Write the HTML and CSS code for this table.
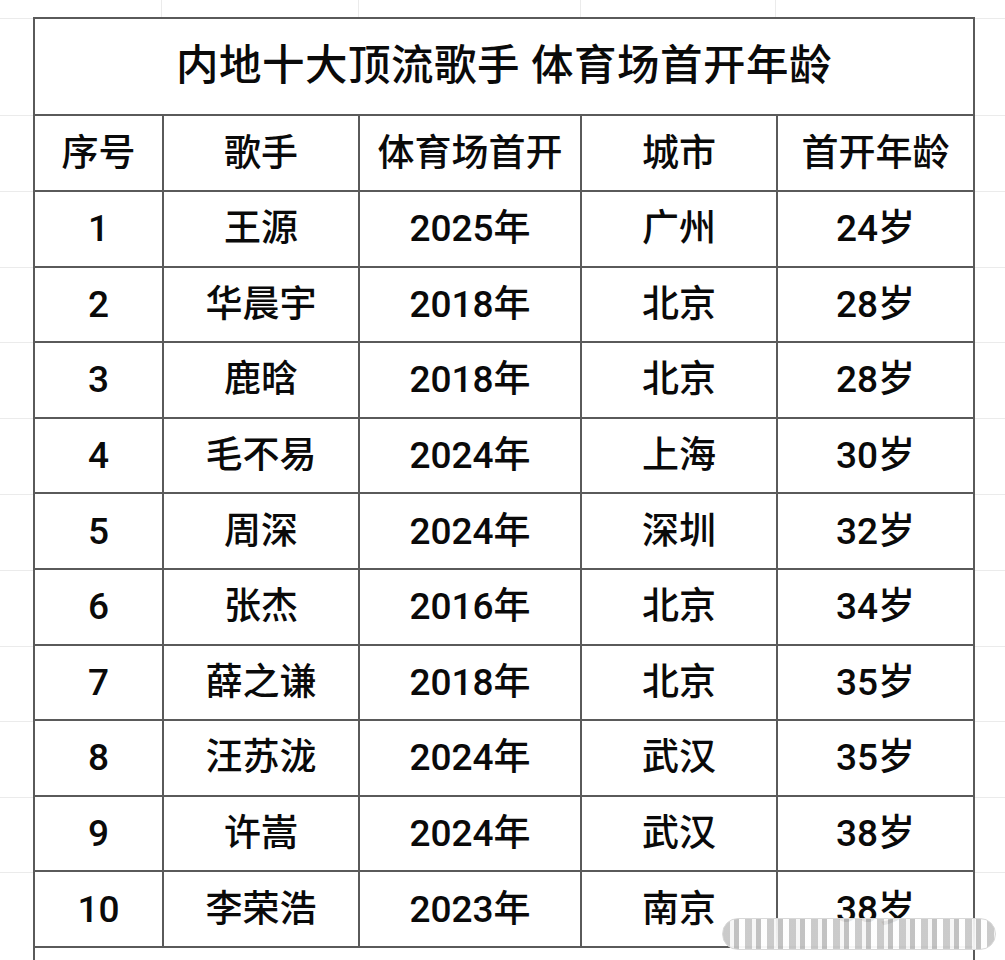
FILE: index.html
```html
<!DOCTYPE html>
<html lang="zh-CN">
<head>
<meta charset="utf-8">
<title>内地十大顶流歌手 体育场首开年龄</title>
<link rel="stylesheet" href="styles.css">
</head>
<body>
<div class="sheet">
  <table class="grid">
    <colgroup>
      <col class="c1"><col class="c2"><col class="c3"><col class="c4"><col class="c5">
    </colgroup>
    <thead>
      <tr class="title-row"><th colspan="5">内地十大顶流歌手 体育场首开年龄</th></tr>
      <tr class="head-row"><th>序号</th><th>歌手</th><th>体育场首开</th><th>城市</th><th>首开年龄</th></tr>
    </thead>
    <tbody>
      <tr><td>1</td><td>王源</td><td>2025年</td><td>广州</td><td>24岁</td></tr>
      <tr><td>2</td><td>华晨宇</td><td>2018年</td><td>北京</td><td>28岁</td></tr>
      <tr><td>3</td><td>鹿晗</td><td>2018年</td><td>北京</td><td>28岁</td></tr>
      <tr><td>4</td><td>毛不易</td><td>2024年</td><td>上海</td><td>30岁</td></tr>
      <tr><td>5</td><td>周深</td><td>2024年</td><td>深圳</td><td>32岁</td></tr>
      <tr><td>6</td><td>张杰</td><td>2016年</td><td>北京</td><td>34岁</td></tr>
      <tr><td>7</td><td>薛之谦</td><td>2018年</td><td>北京</td><td>35岁</td></tr>
      <tr><td>8</td><td>汪苏泷</td><td>2024年</td><td>武汉</td><td>35岁</td></tr>
      <tr><td>9</td><td>许嵩</td><td>2024年</td><td>武汉</td><td>38岁</td></tr>
      <tr><td>10</td><td>李荣浩</td><td>2023年</td><td>南京</td><td>38岁</td></tr>
      <tr class="empty-row"><td colspan="5"></td></tr>
    </tbody>
  </table>
  <div class="watermark" aria-hidden="true"></div>
</div>
</body>
</html>
```

FILE: styles.css
```css
html, body {
  margin: 0;
  padding: 0;
  background: #ffffff;
}

.sheet {
  position: relative;
  width: 1005px;
  height: 960px;
  overflow: hidden;
  box-sizing: border-box;
  padding: 17px 0 0 33px;
  font-family: Roboto, "Noto Sans CJK SC", sans-serif;
  color: #0a0a0a;
  background-color: #ffffff;
  background-image:
    linear-gradient(#ebebeb, #ebebeb),
    linear-gradient(#ebebeb, #ebebeb),
    linear-gradient(#ebebeb, #ebebeb),
    linear-gradient(#ebebeb, #ebebeb),
    linear-gradient(#ebebeb, #ebebeb),
    linear-gradient(#ebebeb, #ebebeb),
    linear-gradient(#ebebeb, #ebebeb),
    linear-gradient(#ebebeb, #ebebeb),
    linear-gradient(#ebebeb, #ebebeb),
    linear-gradient(#ebebeb, #ebebeb),
    linear-gradient(#ebebeb, #ebebeb),
    linear-gradient(#ebebeb, #ebebeb),
    linear-gradient(#ebebeb, #ebebeb),
    linear-gradient(#ebebeb, #ebebeb),
    linear-gradient(#ebebeb, #ebebeb),
    linear-gradient(#ebebeb, #ebebeb);
  background-repeat: no-repeat;
  background-size:
    100% 1px, 100% 1px, 100% 1px, 100% 1px, 100% 1px, 100% 1px,
    100% 1px, 100% 1px, 100% 1px, 100% 1px, 100% 1px, 100% 1px,
    1px 18px, 1px 18px, 1px 18px, 1px 18px;
  background-position:
    0 18px, 0 115px, 0 191px, 0 267px, 0 342px, 0 418px,
    0 494px, 0 570px, 0 646px, 0 721px, 0 797px, 0 872px,
    161px 0, 358px 0, 580px 0, 775px 0;
}

.grid {
  border-collapse: collapse;
  table-layout: fixed;
  width: 940px;
  background: #ffffff;
}

.c1 { width: 129px; }
.c2 { width: 196px; }
.c3 { width: 222px; }
.c4 { width: 196px; }
.c5 { width: 197px; }

.grid th,
.grid td {
  border: 2px solid #5a5a5a;
  padding: 0;
  text-align: center;
  vertical-align: middle;
  font-size: 37px;
  font-weight: 500;
  line-height: 1;
  white-space: nowrap;
}

.title-row th {
  height: 95px;
  font-size: 42.5px;
  font-weight: 500;
  letter-spacing: 0.5px;
}

.head-row th {
  height: 74px;
}

.grid tbody tr td {
  height: 73.6px;
}

.grid tbody tr.empty-row td {
  height: 60px;
  border-bottom: none;
}

.watermark {
  position: absolute;
  left: 722px;
  top: 918px;
  width: 272px;
  height: 30px;
  border: 1px solid #d8d8d8;
  border-radius: 16px;
  background-color: rgba(255, 255, 255, 0.85);
  background-image:
    repeating-linear-gradient(90deg,
      rgba(150, 150, 150, 0.5) 0 7px,
      rgba(235, 235, 235, 0.4) 7px 11px,
      rgba(120, 120, 120, 0.45) 11px 16px,
      rgba(250, 250, 250, 0.3) 16px 22px),
    linear-gradient(180deg, rgba(255,255,255,0.1), rgba(255,255,255,0.6));
  background-size: 100% 100%;
}
```
